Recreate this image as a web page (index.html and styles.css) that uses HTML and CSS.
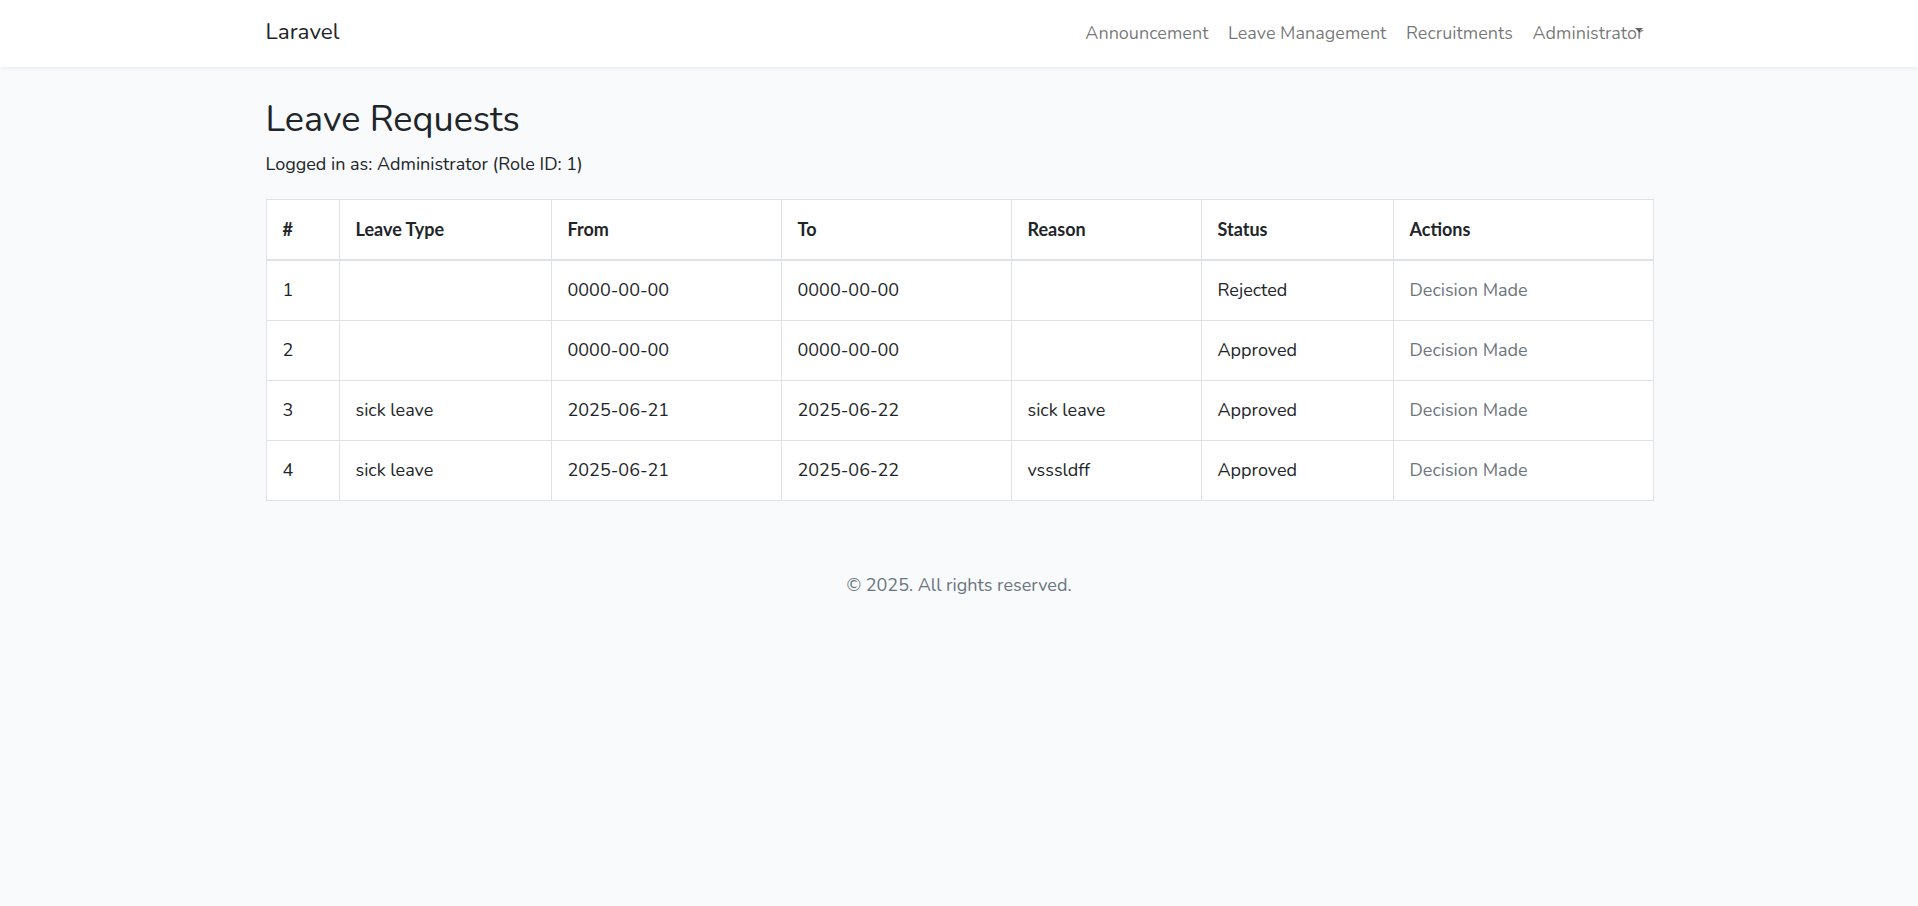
FILE: index.html
```html
<!DOCTYPE html>
<html lang="en">
<head>
<meta charset="utf-8">
<title>Leave Requests</title>
<link rel="stylesheet" href="styles.css">
</head>
<body>
<nav class="navbar">
  <div class="nav-inner">
    <a class="brand" href="#">Laravel</a>
    <ul class="nav-links">
      <li><a href="#">Announcement</a></li>
      <li><a href="#">Leave Management</a></li>
      <li><a href="#">Recruitments</a></li>
      <li><a href="#" class="dropdown">Administrator</a></li>
    </ul>
  </div>
</nav>
<main class="container">
  <h2 class="title">Leave Requests</h2>
  <p class="who">Logged in as: Administrator (Role ID: 1)</p>
  <table class="requests">
    <colgroup>
      <col class="c-num"><col class="c-type"><col class="c-from"><col class="c-to"><col class="c-reason"><col class="c-status"><col class="c-actions">
    </colgroup>
    <thead>
      <tr><th>#</th><th>Leave Type</th><th>From</th><th>To</th><th>Reason</th><th>Status</th><th>Actions</th></tr>
    </thead>
    <tbody>
      <tr><td>1</td><td></td><td>0000-00-00</td><td>0000-00-00</td><td></td><td>Rejected</td><td class="muted">Decision Made</td></tr>
      <tr><td>2</td><td></td><td>0000-00-00</td><td>0000-00-00</td><td></td><td>Approved</td><td class="muted">Decision Made</td></tr>
      <tr><td>3</td><td>sick leave</td><td>2025-06-21</td><td>2025-06-22</td><td>sick leave</td><td>Approved</td><td class="muted">Decision Made</td></tr>
      <tr><td>4</td><td>sick leave</td><td>2025-06-21</td><td>2025-06-22</td><td>vsssldff</td><td>Approved</td><td class="muted">Decision Made</td></tr>
    </tbody>
  </table>
</main>
<footer class="footer">© 2025. All rights reserved.</footer>
</body>
</html>
```
FILE: styles.css
```css
html, body {
  margin: 0;
  padding: 0;
}
body {
  background: #f8fafc;
  color: #212529;
  font-family: "Nunito", "Lato", "Open Sans", sans-serif;
  font-size: 18px;
  line-height: 1.6;
}
a { text-decoration: none; }

.navbar {
  background: #fff;
  height: 67px;
  box-sizing: border-box;
  padding-top: 14px;
  box-shadow: 0 2px 4px rgba(0, 0, 0, 0.05);
}
.nav-inner {
  width: 1387px;
  margin: 0 auto;
  display: flex;
  justify-content: space-between;
  align-items: baseline;
}
.brand {
  color: #212529;
  font-size: 22.5px;
  line-height: 36px;
}
.nav-links {
  list-style: none;
  margin: 0;
  padding: 0;
  display: flex;
}
.nav-links a {
  display: block;
  position: relative;
  padding: 0 9.8px;
  color: rgba(0, 0, 0, 0.55);
  font-size: 18px;
  line-height: 28.8px;
}
.nav-links li:last-child a {
  padding-right: 9px;
}
.dropdown::after {
  content: "";
  position: absolute;
  right: 10px;
  top: 9px;
  border-top: 4.5px solid rgba(0, 0, 0, 0.6);
  border-left: 4.5px solid transparent;
  border-right: 4.5px solid transparent;
}

.container {
  width: 1387px;
  margin: 0 auto;
  padding-top: 31px;
}
.title {
  font-size: 36px;
  font-weight: 400;
  line-height: 1.2;
  margin: 0 0 9.3px;
}
.who {
  margin: 0 0 19.5px;
}
.requests {
  width: 1387px;
  table-layout: fixed;
  border-collapse: collapse;
  background: #fff;
  border: 1px solid #dee2e6;
}
.c-num { width: 73px; }
.c-type { width: 212px; }
.c-from { width: 230px; }
.c-to { width: 230px; }
.c-reason { width: 190px; }
.c-status { width: 192px; }
.c-actions { width: 260px; }
.requests th,
.requests td {
  border: 1px solid #dee2e6;
  padding: 0 16px;
  height: 59px;
  text-align: left;
  vertical-align: middle;
}
.requests th {
  font-family: "Lato", sans-serif;
  font-weight: 700;
  border-bottom: 2px solid #dee2e6;
}
.muted { color: #6c757d; }

.footer {
  text-align: center;
  color: #6c757d;
  margin-top: 70px;
}
```
